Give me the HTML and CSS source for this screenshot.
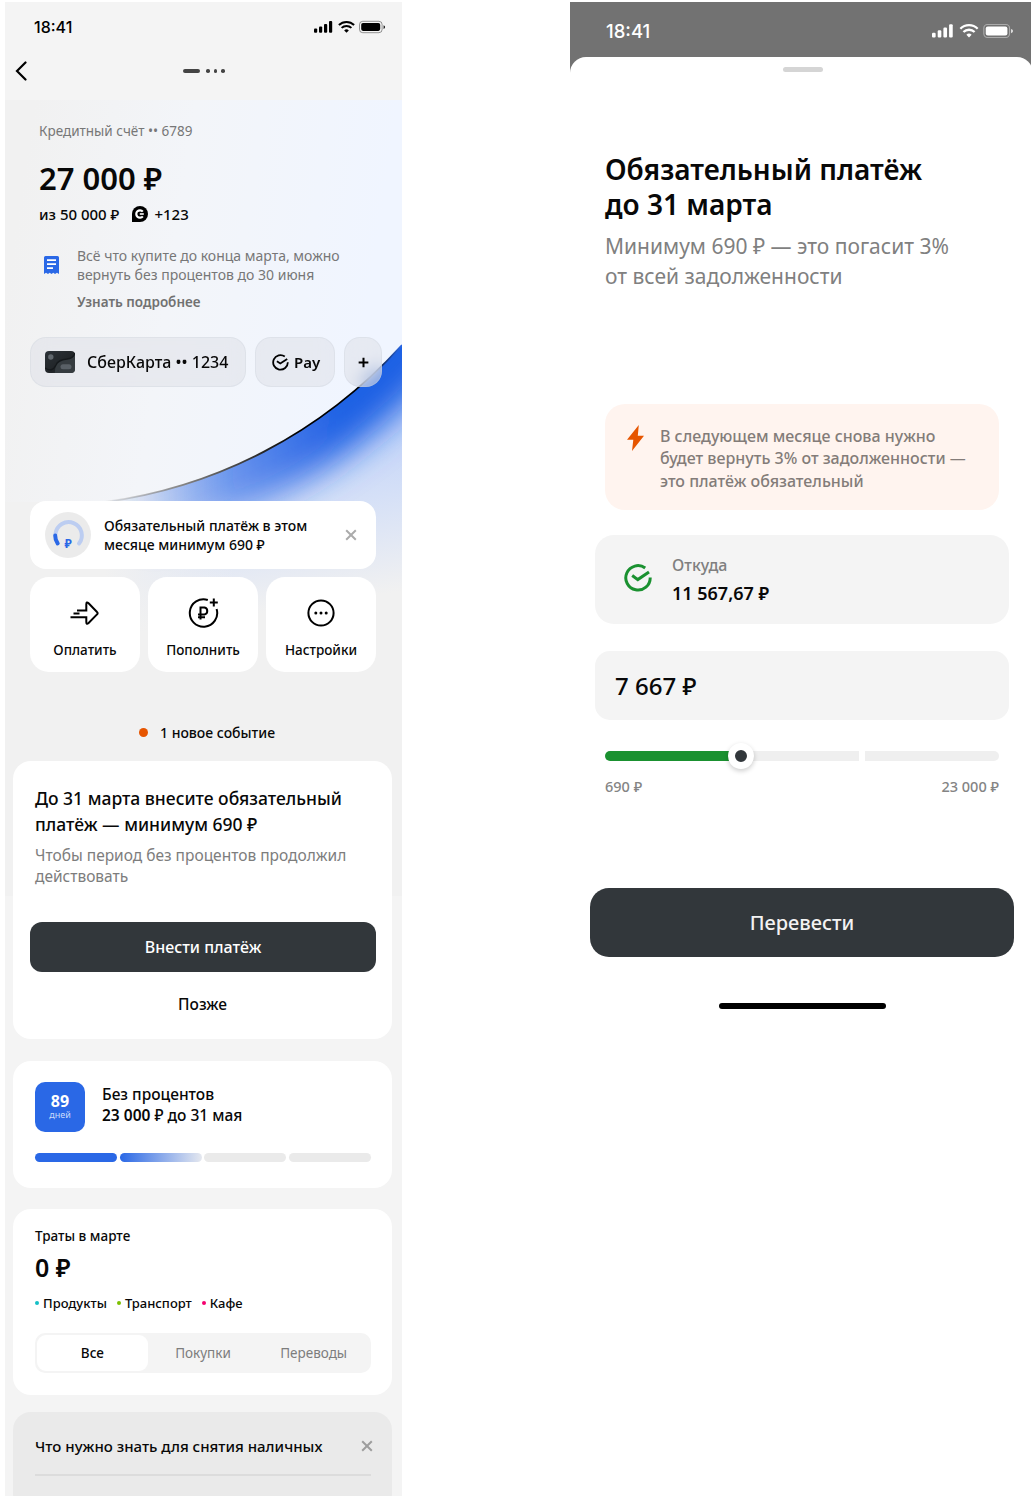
FILE: index.html
```html
<!DOCTYPE html>
<html lang="ru">
<head>
<meta charset="utf-8">
<title>Кредитный счёт</title>
<link rel="stylesheet" href="styles.css">
</head>
<body>
<main class="stage">
  <section class="phone">
    <svg class="backdrop" viewBox="0 0 397 796" preserveAspectRatio="none">
      <defs>
        <linearGradient id="sky" x1="0" y1="0.15" x2="1" y2="0.3"><stop offset="0.05" stop-color="#f1f1f1"/><stop offset="0.45" stop-color="#f3f5f9"/><stop offset="0.95" stop-color="#f0f5ff"/></linearGradient>
        <linearGradient id="haze" gradientUnits="userSpaceOnUse" x1="250" y1="350" x2="275" y2="510"><stop offset="0" stop-color="#c3d4f9"/><stop offset="0.4" stop-color="#d5e0f7"/><stop offset="1" stop-color="#f1f1f1"/></linearGradient>
        <linearGradient id="fadeHaze" gradientUnits="userSpaceOnUse" x1="100" y1="0" x2="230" y2="0"><stop offset="0" stop-color="#f1f1f1"/><stop offset="1" stop-color="#f1f1f1" stop-opacity="0"/></linearGradient>
        <linearGradient id="glow" gradientUnits="userSpaceOnUse" x1="120" y1="0" x2="330" y2="0"><stop offset="0" stop-color="#2a68e6" stop-opacity="0"/><stop offset="0.5" stop-color="#2a68e6" stop-opacity="0.6"/><stop offset="1" stop-color="#1f60e4"/></linearGradient>
        <linearGradient id="edge" gradientUnits="userSpaceOnUse" x1="100" y1="0" x2="397" y2="0"><stop offset="0" stop-color="#8a8a8a" stop-opacity="0.1"/><stop offset="0.25" stop-color="#888"/><stop offset="0.65" stop-color="#000"/><stop offset="0.88" stop-color="#000"/><stop offset="1" stop-color="#2a68e6"/></linearGradient>
        <clipPath id="under"><path d="M100 402 C210 387 315 335 397 245 V796 H100 Z"/></clipPath>
        <filter id="soft" x="-30%" y="-50%" width="160%" height="200%"><feGaussianBlur stdDeviation="17"/></filter>
      </defs>
      <rect width="397" height="796" fill="#f1f1f1"/>
      <path d="M0 0 H397 V245 C315 335 210 387 100 402 H0 Z" fill="url(#sky)"/>
      <g clip-path="url(#under)">
        <rect x="100" y="240" width="297" height="300" fill="url(#haze)"/>
        <rect x="100" y="240" width="150" height="300" fill="url(#fadeHaze)"/>
        <path d="M100 402 C210 387 315 335 397 245 L440 190" fill="none" stroke="url(#glow)" stroke-width="88" filter="url(#soft)"/>
      </g>
      <path d="M100 402 C210 387 315 335 397 245" fill="none" stroke="url(#edge)" stroke-width="1.8"/>
    </svg>

    <header class="topbar">
      <div class="status">
        <span class="clock">18:41</span>
        <svg class="signals" viewBox="0 0 72 14"><g fill="currentColor"><rect x="0" y="8.6" width="3.2" height="4.2" rx="1"/><rect x="5" y="6.4" width="3.2" height="6.4" rx="1"/><rect x="10" y="4" width="3.2" height="8.8" rx="1"/><rect x="15" y="1" width="3.2" height="11.8" rx="1"/><path d="M32.500 12.800 l-2.300-2.400 a3.300 3.300 0 0 1 4.600 0 Z"/><rect x="47.200" y="3" width="19" height="7.900" rx="1.800"/><path d="M69.600 5.200 v3.800 a2 2 0 0 0 0-3.800"/></g><g fill="none" stroke="currentColor" stroke-width="2"><path d="M27.600 7.900 a7 7 0 0 1 9.800 0"/><path d="M24.900 5 a10.900 10.900 0 0 1 15.200 0"/></g><rect x="45.500" y="1.300" width="22.600" height="11.400" rx="3.200" fill="none" stroke="currentColor" stroke-opacity="0.4"/></svg>
      </div>
      <div class="nav">
        <svg class="back" viewBox="0 0 12 20"><path d="M10.500 1.500 L2 10 L10.500 18.500" fill="none" stroke="#000" stroke-width="2.200" stroke-linecap="round"/></svg>
        <div class="pager"><i class="dash"></i><i></i><i></i><i></i></div>
      </div>
    </header>

    <div class="account">
      <p class="account-name">Кредитный счёт •• 6789</p>
      <p class="balance">27 000 ₽</p>
      <p class="limit"><span class="limit-sum">из 50 000 ₽</span><svg class="bonus" viewBox="0 0 16 16"><path d="M0 8 A8 8 0 1 1 8 16 H0 Z" fill="#000"/><path d="M10.800 5.600 A3.700 3.700 0 1 0 10.800 10.400" fill="none" stroke="#fff" stroke-width="2.200"/><path d="M7.800 8 H11.800" stroke="#fff" stroke-width="1.600"/></svg><span class="bonus-sum">+123</span></p>
      <div class="promo">
        <svg class="receipt" viewBox="0 0 15 18"><path d="M0 1.500 Q0 0 1.500 0 H13.500 Q15 0 15 1.500 V18 L13 16.800 L11 18 L9.300 16.800 L7.500 18 L5.700 16.800 L4 18 L2 16.800 L0 18 Z" fill="#2a68e6"/><path d="M3 4.200 H12 M3 8.200 H12 M3 12.200 H9" stroke="#fff" stroke-width="1.700"/></svg>
        <div><p class="promo-text">Всё что купите до конца марта, можно<br><span class="promo-second">вернуть без процентов до 30 июня</span></p><p class="promo-more">Узнать подробнее</p></div>
      </div>
    </div>

    <div class="chips">
      <div class="chip chip-card">
        <svg class="mini-card" viewBox="0 0 30 22"><defs><linearGradient id="plastic" x1="0" y1="0" x2="1" y2="1"><stop offset="0" stop-color="#2c3238"/><stop offset="0.6" stop-color="#202427"/><stop offset="1" stop-color="#51585d"/></linearGradient></defs><rect width="30" height="22" rx="4" fill="url(#plastic)"/><path d="M10 22 C10 10 16 9 21 8.500 C26 8 29 6 30 3 V18 Q30 22 26 22 Z" fill="#353b3f"/><path d="M0 17 Q7 22 11 14 C13 9 18 8.500 22 8 C27 7.500 29 5 30 2" fill="none" stroke="#15191c" stroke-width="1.300"/><circle cx="5.800" cy="6" r="2.700" fill="#61686e"/><rect x="15.500" y="13.300" width="11" height="5" rx="2.500" fill="#596066"/></svg>
        <span class="chip-name">СберКарта •• 1234</span>
      </div>
      <div class="chip chip-pay">
        <svg class="pay-mark" viewBox="0 0 17 17"><g fill="none" stroke="#000" stroke-width="1.800"><path d="M12.800 2.500 A7.300 7.300 0 1 0 15.800 8.300"/><path d="M4.900 7.300 L8.300 9.500 L15.200 4.900"/></g></svg>
        <span>Pay</span>
      </div>
      <div class="chip chip-add"><svg class="plus" viewBox="0 0 12 12"><path d="M6 .7 V11.300 M.7 6 H11.300" stroke="#000" stroke-width="2.200"/></svg></div>
    </div>

    <div class="notice">
      <svg class="gauge" viewBox="0 0 46 46"><circle cx="23" cy="23" r="23" fill="#ebebeb"/><path d="M34 31.500 A13.200 13.200 0 1 0 10.500 22" fill="none" stroke="#bccdf1" stroke-width="4" stroke-linecap="round"/><path d="M10.200 23.500 A13.200 13.200 0 0 0 12.700 31.500" fill="none" stroke="#2a68e6" stroke-width="4" stroke-linecap="round"/><text x="23.200" y="36" text-anchor="middle" class="gauge-sign">₽</text></svg>
      <p class="notice-text">Обязательный платёж в этом<br><span class="notice-second">месяце минимум 690 ₽</span></p>
      <svg class="close" viewBox="0 0 12 12"><path d="M1.200 1.200 L10.800 10.800 M10.800 1.200 L1.200 10.800" stroke="#ababab" stroke-width="2"/></svg>
    </div>

    <div class="actions">
      <div class="action"><svg class="action-icon" viewBox="0 0 32 32"><path d="M8 13.500 H17.300 V7.400 Q17.300 4.200 19.600 6.200 L28 15 Q29.300 16.200 28 17.400 L19.600 26 Q17.300 28 17.300 25 V20.300 H1.500 M4.500 16.500 H10.500" fill="none" stroke="#000" stroke-width="2"/></svg><span class="a-pay">Оплатить</span></div>
      <div class="action"><svg class="action-icon" viewBox="0 0 32 32"><g fill="none" stroke="#000" stroke-width="2"><path d="M20.800 3 A13.700 13.700 0 1 0 29.600 12"/><path d="M26.800 1.500 V9.500 M22.800 5.500 H30.800"/><path d="M13.500 22.500 V10.500 H17.500 A3.600 3.600 0 0 1 17.500 17.500 H11 M11 20.300 H18"/></g></svg><span class="a-top">Пополнить</span></div>
      <div class="action"><svg class="action-icon" viewBox="0 0 32 32"><circle cx="16" cy="16" r="12.600" fill="none" stroke="#000" stroke-width="2"/><g fill="#000"><circle cx="10.800" cy="16" r="1.500"/><circle cx="16" cy="16" r="1.500"/><circle cx="21.200" cy="16" r="1.500"/></g></svg><span class="a-set">Настройки</span></div>
    </div>

    <p class="event"><i></i><span>1 новое событие</span></p>

    <article class="card duty">
      <h2 class="duty-title">До 31 марта внесите обязательный<br><span class="duty-second">платёж — минимум 690 ₽</span></h2>
      <p class="duty-note">Чтобы период без процентов продолжил<br>действовать</p>
      <button class="pay-button">Внести платёж</button>
      <a class="later">Позже</a>
    </article>

    <article class="card grace">
      <div class="grace-row">
        <div class="days"><b>89</b><small>дней</small></div>
        <p class="grace-text"><span class="g-one">Без процентов</span><br><span class="g-two"><b>23 000</b> ₽ до 31 мая</span></p>
      </div>
      <div class="steps"><i class="full"></i><i class="part"></i><i></i><i></i></div>
    </article>

    <article class="card spend">
      <p class="spend-title">Траты в марте</p>
      <p class="spend-sum">0 ₽</p>
      <p class="legend"><span class="food">Продукты</span><span class="ride">Транспорт</span><span class="cafe">Кафе</span></p>
      <div class="tabs"><span class="tab active">Все</span><span class="tab">Покупки</span><span class="tab">Переводы</span></div>
    </article>

    <article class="card tips">
      <div class="tips-row"><h3>Что нужно знать для снятия наличных</h3><svg class="close" viewBox="0 0 12 12"><path d="M1.200 1.200 L10.800 10.800 M10.800 1.200 L1.200 10.800" stroke="#9d9d9d" stroke-width="2"/></svg></div>
    </article>
  </section>

  <section class="second">
    <div class="status status-dim">
      <span class="clock">18:41</span>
      <svg class="signals" viewBox="0 0 72 14"><g fill="currentColor"><rect x="0" y="8.600" width="3.200" height="4.200" rx="1"/><rect x="5" y="6.400" width="3.200" height="6.400" rx="1"/><rect x="10" y="4" width="3.200" height="8.800" rx="1"/><rect x="15" y="1" width="3.200" height="11.800" rx="1"/><path d="M32.500 12.800 l-2.300-2.400 a3.300 3.300 0 0 1 4.600 0 Z"/><rect x="47.200" y="3" width="19" height="7.900" rx="1.800"/><path d="M69.600 5.200 v3.800 a2 2 0 0 0 0-3.800"/></g><g fill="none" stroke="currentColor" stroke-width="2"><path d="M27.600 7.900 a7 7 0 0 1 9.800 0"/><path d="M24.900 5 a10.900 10.900 0 0 1 15.200 0"/></g><rect x="45.500" y="1.300" width="22.600" height="11.400" rx="3.200" fill="none" stroke="currentColor" stroke-opacity="0.4"/></svg>
    </div>
    <div class="sheet">
      <i class="grip"></i>
      <h1>Обязательный платёж<br><span class="h-second">до 31 марта</span></h1>
      <p class="lead">Минимум 690 ₽ — это погасит 3%<br><span class="lead-second">от всей задолженности</span></p>
      <div class="warning">
        <svg class="bolt" viewBox="0 0 17 26"><path d="M11.800 0 L0 14.800 H6.300 L5 26 L17 10.800 H10.800 Z" fill="#e65500"/></svg>
        <p>В следующем месяце снова нужно<br>будет вернуть 3% от задолженности —<br>это платёж обязательный</p>
      </div>
      <div class="source">
        <svg class="source-mark" viewBox="0 0 28 28"><g fill="none" stroke="#1a9130" stroke-width="3"><path d="M21.200 4 A12.200 12.200 0 1 0 26.200 13.500"/><path d="M8.200 11.500 L13.800 15.600 L25 8"/></g></svg>
        <div><p class="source-label">Откуда</p><p class="source-sum">11 567,67 ₽</p></div>
      </div>
      <div class="amount">7 667 ₽</div>
      <div class="slider"><i class="done"></i><i class="rest"></i><i class="tail"></i><i class="thumb"></i></div>
      <div class="range"><span class="r-min">690 ₽</span><span class="r-max">23 000 ₽</span></div>
      <button class="send">Перевести</button>
      <i class="home"></i>
    </div>
  </section>
</main>
</body>
</html>
```
FILE: styles.css
```css
* { box-sizing: border-box; margin: 0; padding: 0; }
body { background: #fff; color: #080808; font-family: "Noto Sans", "Open Sans", sans-serif; font-weight: 500; }
p, h1, h2, h3, span, button, a { white-space: nowrap; }
svg { display: block; flex: none; }
i { display: block; flex: none; }
.stage { width: 1031px; height: 1502px; padding: 2px 0 0 5px; display: flex; justify-content: space-between; align-items: flex-start; overflow: hidden; }

.phone { position: relative; width: 397px; height: 1494px; background: #f4f4f4; overflow: hidden; }
.phone > * { position: relative; }
.phone > .backdrop { position: absolute; left: 0; top: 98px; width: 397px; height: 796px; }
.topbar { height: 98px; }
.status { height: 50px; display: flex; align-items: center; justify-content: space-between; padding: 0 16px 0 29px; color: #000; }
.clock { font-family: Inter, sans-serif; font-size: 16px; font-weight: 500; }
.signals { width: 72px; height: 14px; }
.nav { height: 38px; display: flex; align-items: center; padding-left: 10px; }
.back { width: 12px; height: 20px; }
.pager { display: flex; align-items: center; gap: 4px; margin-left: 156px; }
.pager i { width: 3.500px; height: 3.500px; border-radius: 50%; background: #444; }
.pager .dash { width: 17px; border-radius: 2px; margin-right: 2px; }

.account { padding: 19px 0 0 34px; height: 237px; }
.account-name { font-size: 13.500px; line-height: 24px; color: #777; font-weight: 400; }
.balance { font-size: 31px; line-height: 40px; margin-top: 15px; font-weight: 600; }
.limit { display: flex; align-items: center; font-size: 15px; line-height: 24px; margin-top: 4px; }
.bonus { width: 16px; height: 16px; margin: 0 6px 0 13px; }
.promo { display: flex; margin-top: 20px; gap: 18px; padding-left: 5px; }
.receipt { width: 15px; height: 18px; margin-top: 10px; }
.promo-text { font-size: 14px; line-height: 19px; color: #777; font-weight: 400; }
.promo-more { font-size: 13.500px; line-height: 20px; margin-top: 8px; color: #717171; font-weight: 600; }

.chips { display: flex; gap: 9px; padding-left: 25px; height: 50px; }
.chip { height: 50px; border-radius: 16px; background: rgba(222, 224, 231, .55); border: 1px solid rgba(200, 205, 215, .3); backdrop-filter: blur(9px); display: flex; align-items: center; font-size: 16px; }
.chip-card { width: 216px; padding-left: 14px; gap: 12px; }
.mini-card { width: 30px; height: 22px; }
.chip-pay { width: 80px; padding-left: 16px; gap: 5px; font-weight: 600; font-size: 15px; }
.pay-mark { width: 17px; height: 17px; }
.chip-add { width: 38px; justify-content: center; }
.plus { width: 11px; height: 11px; }

.notice { margin: 114px 0 0 25px; width: 346px; height: 68px; border-radius: 16px; background: #fff; display: flex; align-items: center; padding: 0 19px 0 15px; }
.gauge { width: 46px; height: 46px; margin-right: 13px; }
.gauge-sign { font-size: 12px; font-weight: 700; fill: #2a68e6; }
.notice-text { font-size: 14px; line-height: 19px; }
.close { width: 12px; height: 12px; margin-left: auto; }

.actions { display: flex; gap: 8px; margin: 8px 0 0 25px; width: 346px; height: 95px; }
.action { flex: 1; background: #fff; border-radius: 19px; display: flex; flex-direction: column; align-items: center; padding-top: 20px; font-size: 13.500px; line-height: 20px; }
.action-icon { width: 32px; height: 32px; margin-bottom: 11px; }

.event { display: flex; align-items: center; height: 24px; margin: 48px 0 0 134px; gap: 12px; font-size: 14px; }
.event i { width: 9px; height: 9px; border-radius: 50%; background: #e65500; }

.card { width: 379px; margin-left: 8px; background: #fff; border-radius: 18px; padding: 0 22px; }
.duty { height: 278px; margin-top: 17px; padding: 25px 17px 0; }
.duty-title { font-size: 17.500px; line-height: 25.500px; font-weight: 500; padding-left: 5px; }
.duty-note { font-size: 15.500px; line-height: 21px; color: #7d7d7d; font-weight: 400; margin-top: 8px; padding-left: 5px; }
.pay-button { display: block; margin-top: 34.500px; width: 346px; height: 50.500px; border: 0; border-radius: 12px; background: #32373b; color: #fff; font: 500 16px "Noto Sans", sans-serif; }
.later { display: block; text-align: center; margin-top: 20px; font-size: 15.500px; line-height: 24px; }

.grace { height: 127px; margin-top: 22px; padding-top: 21px; }
.grace-row { display: flex; height: 51px; gap: 17px; }
.days { width: 50px; height: 50px; border-radius: 10px; background: #2a68e6; color: #fff; text-align: center; display: flex; flex-direction: column; padding-top: 10px; }
.days b { font-size: 16px; line-height: 18px; font-weight: 700; }
.days small { font-size: 9px; line-height: 10px; font-weight: 400; color: #c9dafb; }
.grace-text { font-size: 15.500px; line-height: 21px; padding-top: 2px; }
.grace-text b { font-weight: 600; }
.steps { display: grid; grid-template-columns: repeat(4, 1fr); gap: 2.500px; margin-top: 20px; width: 336px; }
.steps i { height: 9px; border-radius: 4.500px; background: #eaeaea; }
.steps .full { background: #2a68e6; }
.steps .part { background: linear-gradient(90deg, #2a68e6, #e5e8ef); }

.spend { height: 186px; margin-top: 21px; padding-top: 15px; }
.spend-title { font-size: 13.500px; line-height: 24px; }
.spend-sum { font-size: 25px; line-height: 32px; margin-top: 3px; font-weight: 600; }
.legend { display: flex; gap: 10px; font-size: 13px; line-height: 24px; margin-top: 8px; }
.legend span { display: flex; align-items: center; gap: 4px; }
.legend span::before { content: ""; width: 4px; height: 4px; border-radius: 50%; background: #14bfc6; }
.legend .ride::before { background: #7cc000; }
.legend .cafe::before { background: #f5006e; }
.tabs { display: grid; grid-template-columns: repeat(3, 1fr); margin-top: 18px; width: 336px; height: 40px; padding: 2px; border-radius: 10px; background: #f4f4f4; }
.tab { display: flex; align-items: center; justify-content: center; font-size: 13.500px; color: #7d7d7d; font-weight: 400; }
.tab.active { background: #fff; border-radius: 9px; color: #080808; font-weight: 500; }

.tips { height: 100px; margin-top: 17px; background: #eaeaea; padding-right: 19px; }
.tips-row { display: flex; align-items: center; height: 67px; }
.tips h3 { font-size: 15px; font-weight: 500; }
.tips::after { content: ""; display: block; margin-top: -5px; width: 336px; height: 2px; background: #dcdcdc; }

.second { width: 461px; height: 1100px; background: linear-gradient(#727272 0 90px, #fff 90px); }
.status-dim { height: 55px; padding: 3px 17px 0 36px; color: #fff; }
.status-dim .clock { font-size: 18.500px; }
.status-dim .signals { width: 82px; height: 16px; }
.sheet { width: 463px; border-radius: 16px 16px 0 0; background: #fff; padding: 10px 0 0 20px; height: 1040px; }
.grip { width: 40px; height: 5px; border-radius: 3px; background: #d5d5d5; margin-left: 193px; }
h1 { font-size: 28px; line-height: 34.500px; font-weight: 600; margin: 80px 0 0 15px; }
.lead { font-size: 21px; line-height: 29.500px; color: #808080; font-weight: 400; margin: 11px 0 0 15px; }
.warning { display: flex; gap: 16px; margin: 113px 0 0 15px; width: 394px; height: 106px; border-radius: 20px; background: #fff4ef; padding: 21px 0 0 22px; font-size: 16px; line-height: 22.300px; color: #837c79; }
.bolt { width: 17px; height: 26px; }
.source { display: flex; gap: 20px; margin: 25px 0 0 5px; width: 414px; height: 89px; border-radius: 19px; background: #f4f4f4; padding: 18px 0 0 29px; }
.source-mark { width: 28px; height: 28px; margin-top: 11px; }
.source-label { font-size: 16px; line-height: 24px; color: #7f7f7f; }
.source-sum { font-size: 18px; line-height: 28px; font-weight: 600; margin-top: 2px; }
.amount { margin: 27px 0 0 5px; width: 414px; height: 69px; line-height: 69px; border-radius: 15px; background: #f4f4f4; padding-left: 20px; font-size: 24px; }
.slider { position: relative; display: flex; width: 394px; height: 10px; margin: 31px 0 0 15px; }
.done { width: 136px; background: #1a9130; border-radius: 5px 0 0 5px; }
.rest { width: 118px; background: #efefef; margin-right: 6px; }
.tail { flex: 1; background: #efefef; border-radius: 0 5px 5px 0; }
.thumb { position: absolute; left: 123px; top: -8px; width: 26px; height: 26px; border-radius: 50%; background: #32373b; border: 7px solid #fff; box-shadow: 0 2px 5px rgba(0, 0, 0, .2); }
.range { display: flex; justify-content: space-between; width: 394px; margin: 13px 0 0 15px; font-size: 14.500px; line-height: 24px; color: #848484; }
.send { display: block; width: 424px; height: 69px; margin-top: 90px; border: 0; border-radius: 19px; background: #32373b; color: #f2f2f2; font: 500 20px "Noto Sans", sans-serif; }
.home { width: 167px; height: 6px; border-radius: 3px; background: #000; margin: 46px 0 0 129px; }
```
